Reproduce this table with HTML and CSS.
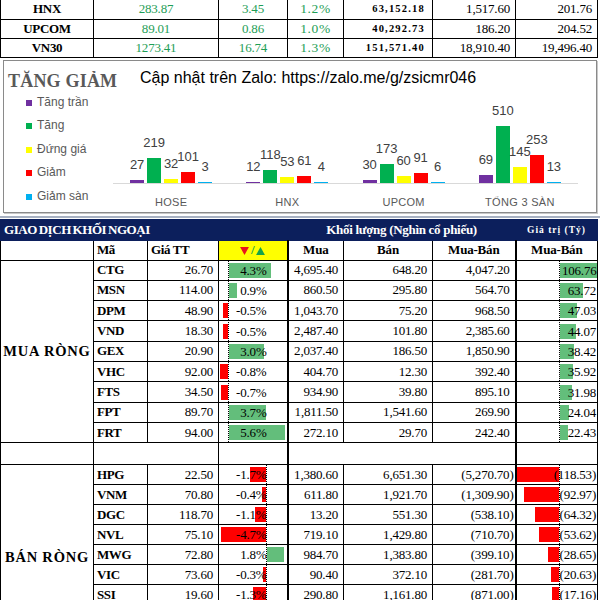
FILE: index.html
```html
<!DOCTYPE html>
<html lang="vi">
<head>
<meta charset="utf-8">
<title>Giao dịch khối ngoại</title>
<link rel="stylesheet" href="styles.css">
</head>
<body>
<table class="idx">
  <colgroup><col class="w93"><col class="w125"><col class="w69"><col class="w56"><col class="w89"><col class="w83"><col class="w82"></colgroup>
  <tr class="first"><td class="nm">HNX</td><td class="g c">283.87</td><td class="g c">3.45</td><td class="g pc">1.2%</td><td class="vol">63,152.18</td><td class="r">1,517.60</td><td class="r">201.76</td></tr>
  <tr><td class="nm">UPCOM</td><td class="g c">89.01</td><td class="g c">0.86</td><td class="g pc">1.0%</td><td class="vol">40,292.73</td><td class="r">186.20</td><td class="r">204.52</td></tr>
  <tr><td class="nm">VN30</td><td class="g c">1273.41</td><td class="g c">16.74</td><td class="g pc">1.3%</td><td class="vol">151,571.40</td><td class="r">18,910.40</td><td class="r">19,496.40</td></tr>
</table>

<div class="chart">
  <div class="chart-head">
    <div class="title">TĂNG GIẢM</div>
    <div class="zalo">Cập nhật trên Zalo: https://zalo.me/g/zsicmr046</div>
  </div>
  <div class="chart-body">
    <ul class="legend">
      <li><i class="k purple"></i>Tăng trần</li>
      <li><i class="k green"></i>Tăng</li>
      <li><i class="k yellow"></i>Đứng giá</li>
      <li><i class="k red"></i>Giảm</li>
      <li><i class="k blue"></i>Giảm sàn</li>
    </ul>
    <div class="plot">
      <div class="bars">
        <div class="grp">
          <div class="bar"><span class="lbl">27</span><i class="b purple" style="height:3px"></i></div>
          <div class="bar"><span class="lbl">219</span><i class="b green" style="height:25px"></i></div>
          <div class="bar"><span class="lbl">32</span><i class="b yellow" style="height:4px"></i></div>
          <div class="bar"><span class="lbl">101</span><i class="b red" style="height:11px"></i></div>
          <div class="bar"><span class="lbl">3</span><i class="b blue" style="height:1px"></i></div>
        </div>
        <div class="grp">
          <div class="bar"><span class="lbl">12</span><i class="b purple" style="height:1px"></i></div>
          <div class="bar"><span class="lbl">118</span><i class="b green" style="height:13px"></i></div>
          <div class="bar"><span class="lbl">53</span><i class="b yellow" style="height:6px"></i></div>
          <div class="bar"><span class="lbl">61</span><i class="b red" style="height:7px"></i></div>
          <div class="bar"><span class="lbl">4</span><i class="b blue" style="height:1px"></i></div>
        </div>
        <div class="grp">
          <div class="bar"><span class="lbl">30</span><i class="b purple" style="height:3px"></i></div>
          <div class="bar"><span class="lbl">173</span><i class="b green" style="height:19px"></i></div>
          <div class="bar"><span class="lbl">60</span><i class="b yellow" style="height:7px"></i></div>
          <div class="bar"><span class="lbl">91</span><i class="b red" style="height:10px"></i></div>
          <div class="bar"><span class="lbl">6</span><i class="b blue" style="height:1px"></i></div>
        </div>
        <div class="grp">
          <div class="bar"><span class="lbl">69</span><i class="b purple" style="height:8px"></i></div>
          <div class="bar"><span class="lbl">510</span><i class="b green" style="height:57px"></i></div>
          <div class="bar"><span class="lbl">145</span><i class="b yellow" style="height:16px"></i></div>
          <div class="bar"><span class="lbl">253</span><i class="b red" style="height:28px"></i></div>
          <div class="bar"><span class="lbl">13</span><i class="b blue" style="height:1px"></i></div>
        </div>
      </div>
      <div class="cats"><span>HOSE</span><span>HNX</span><span>UPCOM</span><span>TỔNG 3 SÀN</span></div>
    </div>
  </div>
</div>

<div class="rule"></div>

<table class="ft">
  <colgroup><col class="w93"><col class="w54"><col class="w71"><col class="w69"><col class="w56"><col class="w89"><col class="w83"><col class="w82"></colgroup>
  <tr class="h21 navy">
    <td colspan="4" class="hd1">GIAO DỊCH KHỐI NGOẠI</td>
    <td colspan="3" class="hd2 sep">Khối lượng (Nghìn cổ phiếu)</td>
    <td class="hd3 sep">Giá trị (Tỷ)</td>
  </tr>
  <tr class="h20 colh">
    <td></td><td class="tk">Mã</td><td class="tk">Giá TT</td>
    <td class="yel"><svg class="tri" viewBox="0 0 10 9" width="9" height="8"><path d="M0 0H10L5 9Z" fill="#e8141c"/></svg><span class="sl">/</span><svg class="tri" viewBox="0 0 10 9" width="9" height="8"><path d="M0 9H10L5 0Z" fill="#16a34a"/></svg></td>
    <td class="c b2">Mua</td><td class="c">Bán</td><td class="c">Mua-Bán</td><td class="c b2">Mua-Bán</td>
  </tr>

  <tr class="hm"><td rowspan="9" class="grpname">MUA RÒNG</td><td class="tk">CTG</td><td class="r">26.70</td>
    <td class="pct"><div class="db m"><div class="trk"><span class="neg"></span><span class="pos"><i class="up" style="width:42px"></i></span></div><span class="v">4.3%</span></div></td>
    <td class="r b2">4,695.40</td><td class="r">648.20</td><td class="r">4,047.20</td>
    <td class="pct b2"><div class="db val"><div class="trk"><span class="neg"></span><span class="pos"><i class="up" style="width:38px"></i></span></div><span class="v">106.76</span></div></td></tr>
  <tr class="hm"><td class="tk">MSN</td><td class="r">114.00</td>
    <td class="pct"><div class="db m"><div class="trk"><span class="neg"></span><span class="pos"><i class="up" style="width:8px"></i></span></div><span class="v">0.9%</span></div></td>
    <td class="r b2">860.50</td><td class="r">295.80</td><td class="r">564.70</td>
    <td class="pct b2"><div class="db val"><div class="trk"><span class="neg"></span><span class="pos"><i class="up" style="width:23px"></i></span></div><span class="v">63.72</span></div></td></tr>
  <tr class="hm"><td class="tk">DPM</td><td class="r">48.90</td>
    <td class="pct"><div class="db m"><div class="trk"><span class="neg"><i class="dn" style="width:5px"></i></span><span class="pos"></span></div><span class="v">-0.5%</span></div></td>
    <td class="r b2">1,043.70</td><td class="r">75.20</td><td class="r">968.50</td>
    <td class="pct b2"><div class="db val"><div class="trk"><span class="neg"></span><span class="pos"><i class="up" style="width:17px"></i></span></div><span class="v">47.03</span></div></td></tr>
  <tr class="hm"><td class="tk">VND</td><td class="r">18.30</td>
    <td class="pct"><div class="db m"><div class="trk"><span class="neg"><i class="dn" style="width:5px"></i></span><span class="pos"></span></div><span class="v">-0.5%</span></div></td>
    <td class="r b2">2,487.40</td><td class="r">101.80</td><td class="r">2,385.60</td>
    <td class="pct b2"><div class="db val"><div class="trk"><span class="neg"></span><span class="pos"><i class="up" style="width:16px"></i></span></div><span class="v">44.07</span></div></td></tr>
  <tr class="hm"><td class="tk">GEX</td><td class="r">20.90</td>
    <td class="pct"><div class="db m"><div class="trk"><span class="neg"></span><span class="pos"><i class="up" style="width:35px"></i></span></div><span class="v">3.0%</span></div></td>
    <td class="r b2">2,037.40</td><td class="r">186.50</td><td class="r">1,850.90</td>
    <td class="pct b2"><div class="db val"><div class="trk"><span class="neg"></span><span class="pos"><i class="up" style="width:14px"></i></span></div><span class="v">38.42</span></div></td></tr>
  <tr class="hm"><td class="tk">VHC</td><td class="r">92.00</td>
    <td class="pct"><div class="db m"><div class="trk"><span class="neg"><i class="dn" style="width:8px"></i></span><span class="pos"></span></div><span class="v">-0.8%</span></div></td>
    <td class="r b2">404.70</td><td class="r">12.30</td><td class="r">392.40</td>
    <td class="pct b2"><div class="db val"><div class="trk"><span class="neg"></span><span class="pos"><i class="up" style="width:13px"></i></span></div><span class="v">35.92</span></div></td></tr>
  <tr class="hm"><td class="tk">FTS</td><td class="r">34.50</td>
    <td class="pct"><div class="db m"><div class="trk"><span class="neg"><i class="dn" style="width:7px"></i></span><span class="pos"></span></div><span class="v">-0.7%</span></div></td>
    <td class="r b2">934.90</td><td class="r">39.80</td><td class="r">895.10</td>
    <td class="pct b2"><div class="db val"><div class="trk"><span class="neg"></span><span class="pos"><i class="up" style="width:12px"></i></span></div><span class="v">31.98</span></div></td></tr>
  <tr class="hm"><td class="tk">FPT</td><td class="r">89.70</td>
    <td class="pct"><div class="db m"><div class="trk"><span class="neg"></span><span class="pos"><i class="up" style="width:37px"></i></span></div><span class="v">3.7%</span></div></td>
    <td class="r b2">1,811.50</td><td class="r">1,541.60</td><td class="r">269.90</td>
    <td class="pct b2"><div class="db val"><div class="trk"><span class="neg"></span><span class="pos"><i class="up" style="width:9px"></i></span></div><span class="v">24.04</span></div></td></tr>
  <tr class="hm"><td class="tk">FRT</td><td class="r">94.00</td>
    <td class="pct"><div class="db m"><div class="trk"><span class="neg"></span><span class="pos"><i class="up" style="width:56px"></i></span></div><span class="v">5.6%</span></div></td>
    <td class="r b2">272.10</td><td class="r">29.70</td><td class="r">242.40</td>
    <td class="pct b2"><div class="db val"><div class="trk"><span class="neg"></span><span class="pos"><i class="up" style="width:8px"></i></span></div><span class="v">22.43</span></div></td></tr>

  <tr class="h22"><td></td><td colspan="2"></td><td></td><td colspan="3" class="b2"></td><td class="b2"></td></tr>

  <tr class="h20"><td rowspan="7" class="grpname top">BÁN RÒNG</td><td class="tk">HPG</td><td class="r">22.50</td>
    <td class="pct"><div class="db s"><div class="trk"><span class="neg"><i class="dn" style="width:16px"></i></span><span class="pos"></span></div><span class="v">-1.7%</span></div></td>
    <td class="r b2">1,380.60</td><td class="r">6,651.30</td><td class="r n">(5,270.70)</td>
    <td class="pct b2"><div class="db val"><div class="trk"><span class="neg"><i class="dn" style="width:42px"></i></span><span class="pos"></span></div><span class="v">(118.53)</span></div></td></tr>
  <tr class="h20"><td class="tk">VNM</td><td class="r">70.80</td>
    <td class="pct"><div class="db s"><div class="trk"><span class="neg"><i class="dn" style="width:4px"></i></span><span class="pos"></span></div><span class="v">-0.4%</span></div></td>
    <td class="r b2">611.80</td><td class="r">1,921.70</td><td class="r n">(1,309.90)</td>
    <td class="pct b2"><div class="db val"><div class="trk"><span class="neg"><i class="dn" style="width:35px"></i></span><span class="pos"></span></div><span class="v">(92.97)</span></div></td></tr>
  <tr class="h20"><td class="tk">DGC</td><td class="r">118.70</td>
    <td class="pct"><div class="db s"><div class="trk"><span class="neg"><i class="dn" style="width:11px"></i></span><span class="pos"></span></div><span class="v">-1.1%</span></div></td>
    <td class="r b2">13.20</td><td class="r">551.30</td><td class="r n">(538.10)</td>
    <td class="pct b2"><div class="db val"><div class="trk"><span class="neg"><i class="dn" style="width:24px"></i></span><span class="pos"></span></div><span class="v">(64.32)</span></div></td></tr>
  <tr class="h20"><td class="tk">NVL</td><td class="r">75.10</td>
    <td class="pct"><div class="db s"><div class="trk"><span class="neg"><i class="dn" style="width:45px"></i></span><span class="pos"></span></div><span class="v">-4.7%</span></div></td>
    <td class="r b2">719.10</td><td class="r">1,429.80</td><td class="r n">(710.70)</td>
    <td class="pct b2"><div class="db val"><div class="trk"><span class="neg"><i class="dn" style="width:20px"></i></span><span class="pos"></span></div><span class="v">(53.62)</span></div></td></tr>
  <tr class="h20"><td class="tk">MWG</td><td class="r">72.80</td>
    <td class="pct"><div class="db s"><div class="trk"><span class="neg"></span><span class="pos"><i class="up" style="width:17px"></i></span></div><span class="v">1.8%</span></div></td>
    <td class="r b2">984.70</td><td class="r">1,383.80</td><td class="r n">(399.10)</td>
    <td class="pct b2"><div class="db val"><div class="trk"><span class="neg"><i class="dn" style="width:11px"></i></span><span class="pos"></span></div><span class="v">(28.65)</span></div></td></tr>
  <tr class="h20"><td class="tk">VIC</td><td class="r">73.60</td>
    <td class="pct"><div class="db s"><div class="trk"><span class="neg"><i class="dn" style="width:3px"></i></span><span class="pos"></span></div><span class="v">-0.3%</span></div></td>
    <td class="r b2">90.40</td><td class="r">372.10</td><td class="r n">(281.70)</td>
    <td class="pct b2"><div class="db val"><div class="trk"><span class="neg"><i class="dn" style="width:8px"></i></span><span class="pos"></span></div><span class="v">(20.63)</span></div></td></tr>
  <tr class="h20"><td class="tk">SSI</td><td class="r">19.60</td>
    <td class="pct"><div class="db s"><div class="trk"><span class="neg"><i class="dn" style="width:13px"></i></span><span class="pos"></span></div><span class="v">-1.3%</span></div></td>
    <td class="r b2">290.80</td><td class="r">1,161.80</td><td class="r n">(871.00)</td>
    <td class="pct b2"><div class="db val"><div class="trk"><span class="neg"><i class="dn" style="width:7px"></i></span><span class="pos"></span></div><span class="v">(17.16)</span></div></td></tr>
</table>
</body>
</html>
```
FILE: styles.css
```css
* { box-sizing: border-box; }
html, body { margin: 0; padding: 0; }
body {
  width: 600px;
  height: 600px;
  overflow: hidden;
  background: #fff;
  color: #000;
  font-family: "Liberation Serif", "Times New Roman", serif;
}

/* ---------- tables ---------- */
table {
  border-collapse: collapse;
  table-layout: fixed;
  width: 598px;
}
td {
  border: 1px solid #000;
  padding: 0;
  white-space: nowrap;
  overflow: hidden;
  font-size: 13px;
  letter-spacing: -0.2px;
  line-height: 18px;
}
.w93 { width: 93px; }
.w125 { width: 125px; }
.w69 { width: 69px; }
.w56 { width: 56px; }
.w54 { width: 54px; }
.w71 { width: 71px; }
.w89 { width: 89px; }
.w83 { width: 83px; }
.w82 { width: 82px; }

.c { text-align: center; }
.r { text-align: right; padding-right: 5px; }
.r.n { padding-right: 1px; }

/* index summary table */
.idx tr { height: 19px; }
.idx tr.first td { border-top: 0; }
.idx .nm { font-weight: bold; text-align: center; letter-spacing: -0.3px; }
.idx .g { color: #1e9e56; }
.idx .pc { text-align: center; font-size: 13.5px; letter-spacing: 0.6px; }
.idx .vol {
  text-align: right;
  font-weight: bold;
  font-size: 10.5px;
  letter-spacing: 1.2px;
  padding-right: 7px;
}

/* ---------- chart ---------- */
.chart {
  margin: 2px 0 0 3px;
  width: 594px;
  height: 153px;
  border: 1px solid #8a8a8a;
  box-shadow: 1px 1px 0 #c8c8c8;
}
.chart-head {
  display: grid;
  grid-template-columns: 132px auto;
  padding-left: 4px;
  height: 30px;
}
.title {
  margin-top: 10px;
  font-weight: bold;
  font-size: 18px;
  line-height: 20px;
  color: #595959;
  letter-spacing: 0.2px;
}
.zalo {
  margin-top: 8px;
  font-family: "Liberation Sans", Arial, sans-serif;
  font-size: 16px;
  line-height: 18px;
  color: #000;
}
.chart-body {
  display: grid;
  grid-template-columns: 109px 465px;
}
.legend {
  list-style: none;
  margin: 0;
  padding: 0 0 0 22px;
  font-family: "Liberation Sans", Arial, sans-serif;
  font-size: 12px;
  color: #595959;
}
.legend li { line-height: 23.5px; white-space: nowrap; }
.k {
  display: inline-block;
  width: 6px;
  height: 6px;
  margin-right: 5px;
  vertical-align: 0;
}
.purple { background: #7030a0; }
.green { background: #00b050; }
.yellow { background: #ffff00; }
.red { background: #ff0000; }
.blue { background: #00b0f0; }

.bars {
  display: grid;
  grid-template-columns: repeat(4, 1fr);
  align-items: end;
  justify-items: center;
  height: 93px;
  border-bottom: 1px solid #d9d9d9;
}
.grp { display: flex; gap: 3px; align-items: flex-end; }
.bar {
  width: 14px;
  display: flex;
  flex-direction: column;
  align-items: center;
}
.lbl {
  font-family: "Liberation Sans", Arial, sans-serif;
  font-size: 13px;
  line-height: 15px;
  color: #404040;
  white-space: nowrap;
  margin-bottom: 8px;
}
.b { display: block; width: 14px; }
.cats {
  display: grid;
  grid-template-columns: repeat(4, 1fr);
  padding-top: 9px;
  font-family: "Liberation Sans", Arial, sans-serif;
  font-size: 11px;
  line-height: 18px;
  color: #595959;
  text-align: center;
  letter-spacing: 0.3px;
}

.rule {
  margin-top: 3px;
  height: 2px;
  background: #a7b1c2;
}

/* ---------- foreign trading table ---------- */
.ft { margin-top: 1px; }
.ft tr.h21 { height: 21px; }
.ft tr.h20 { height: 20px; }
.ft tr.hm { height: 20.33px; }
.ft tr.h22 { height: 22px; }
.ft .b2 { border-left: 2px solid #000; }

.navy td {
  background: #0c1f5c;
  color: #fff;
  font-weight: bold;
  border-color: #0c1f5c;
}
.navy td.sep { border-left: 1px solid #8390b0; }
.hd1 { padding-left: 3px; letter-spacing: -0.45px; word-spacing: -1px; }
.hd2 { text-align: center; letter-spacing: -0.3px; }
.hd3 { text-align: center; font-size: 9.5px; letter-spacing: 1px; }

.colh td { font-weight: bold; }
.tk { font-weight: bold; text-align: left; padding-left: 3px; letter-spacing: -0.4px; }
.yel { background: #ffff00; text-align: center; }
.tri { vertical-align: -0.5px; }
.sl { color: #16a34a; font-weight: bold; margin: 0 2px; }

.grpname {
  text-align: center;
  font-weight: bold;
  font-size: 14.5px;
  letter-spacing: 0.8px;
  vertical-align: middle;
}
.grpname.top { vertical-align: top; padding-top: 84px; line-height: 16px; }

/* data bars */
.pct { padding: 0; }
.db {
  display: grid;
  height: 19px;
}
.db > * { grid-area: 1 / 1; }
.trk { display: flex; height: 19px; }
.neg {
  display: flex;
  justify-content: flex-end;
  padding: 2px 0;
  flex: none;
}
.pos {
  display: flex;
  justify-content: flex-start;
  padding: 2px 0;
  flex: 1;
  border-left: 1px dotted #000;
}
.db.m .neg { width: 9px; }
.db.s .neg { width: 47px; }
.db.val .neg { width: 42px; }
.up { display: block; background: #63be7b; }
.dn { display: block; background: #ff0000; }
.v {
  text-align: right;
  padding-right: 20px;
  line-height: 19px;
}
.db.val .v { padding-right: 1px; }
```
